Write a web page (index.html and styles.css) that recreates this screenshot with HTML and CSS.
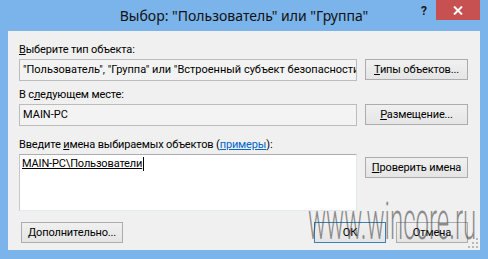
FILE: index.html
```html
<!DOCTYPE html>
<html lang="ru">
<head>
    <meta charset="UTF-8">
    <title>Выбор: "Пользователь" или "Группа"</title>
    <link rel="stylesheet" href="styles.css">
</head>
<body>
<div class="window">
    <div class="titlebar">
        <div class="title">Выбор: "Пользователь" или "Группа"</div>
        <div class="help">?</div>
        <div class="close">
            <svg width="10" height="9" viewBox="0 0 10 9"><path d="M1 0.5 L9 8.5 M9 0.5 L1 8.5" stroke="#fff" stroke-width="2"/></svg>
        </div>
    </div>

    <div class="client">
        <div class="group">
            <div class="label"><u>В</u>ыберите тип объекта:</div>
            <div class="row">
                <div class="field">"Пользователь", "Группа" или "Встроенный субъект безопасности"</div>
                <button class="btn"><u>Т</u>ипы объектов...</button>
            </div>
        </div>

        <div class="group second">
            <div class="label">В с<u>л</u>едующем месте:</div>
            <div class="row">
                <div class="field">MAIN-PC</div>
                <button class="btn"><u>Р</u>азмещение...</button>
            </div>
        </div>

        <div class="group third">
            <div class="label">Введите <u>и</u>мена выбираемых объектов (<a href="#">примеры</a>):</div>
            <div class="row top">
                <div class="names"><span class="resolved">MAIN-PC\Пользователи</span><span class="caret"></span></div>
                <button class="btn check"><u>П</u>роверить имена</button>
            </div>
        </div>

        <div class="footer">
            <button class="btn wide"><u>Д</u>ополнительно...</button>
            <div class="actions">
                <button class="btn small default">ОК</button>
                <button class="btn small">Отмена</button>
            </div>
        </div>

        <svg class="grip" width="10" height="10" viewBox="0 0 10 10">
            <rect x="8" y="0" width="2" height="2" fill="#b8b8b8"/>
            <rect x="4" y="4" width="2" height="2" fill="#b8b8b8"/>
            <rect x="8" y="4" width="2" height="2" fill="#b8b8b8"/>
            <rect x="0" y="8" width="2" height="2" fill="#b8b8b8"/>
            <rect x="4" y="8" width="2" height="2" fill="#b8b8b8"/>
            <rect x="8" y="8" width="2" height="2" fill="#b8b8b8"/>
        </svg>
    </div>

    <div class="watermark">www.wincore.ru</div>
</div>
</body>
</html>
```

FILE: styles.css
```css
body {
    margin: 0;
    font-family: Roboto, "Liberation Sans", sans-serif;
    font-size: 11px;
    letter-spacing: -0.15px;
    color: #000;
    background-color: #7ab4ea;
}

.window {
    position: relative;
    width: 488px;
    height: 259px;
    background-color: #7ab4ea;
    overflow: hidden;
}

.titlebar {
    display: flex;
    height: 31px;
    padding-left: 76px;
    letter-spacing: 0;
}
.title {
    flex: 1;
    text-align: center;
    font-family: "Noto Sans", sans-serif;
    font-size: 14px;
    line-height: 31px;
    color: #111;
}
.help {
    width: 24px;
    text-align: center;
    font-weight: bold;
    font-size: 12px;
    line-height: 22px;
    color: #1a1a1a;
}
.close {
    width: 44px;
    height: 20px;
    margin-right: 8px;
    background-color: #c75050;
    display: flex;
    align-items: center;
    justify-content: center;
}

.client {
    position: relative;
    margin: 0 8px;
    height: 219px;
    box-sizing: border-box;
    padding: 12px 12px 7px 11px;
    background-color: #f0f0f0;
}

.label {
    height: 14px;
    line-height: 14px;
    margin-bottom: 2px;
    white-space: nowrap;
}
.label a {
    color: #0066cc;
}
.group.second {
    margin-top: 7px;
}
.group.third {
    margin-top: 12px;
}

.row {
    display: flex;
    gap: 8px;
}
.row.top {
    align-items: flex-start;
}

.field {
    width: 338px;
    height: 22px;
    box-sizing: border-box;
    border: 1px solid #bcbcbc;
    background-color: #f3f3f3;
    padding: 0 3px;
    line-height: 20px;
    letter-spacing: 0;
    white-space: nowrap;
    overflow: hidden;
}

.names {
    width: 338px;
    height: 57px;
    box-sizing: border-box;
    border: 1px solid #e3e9ef;
    border-top-color: #abadb3;
    border-left-color: #c4c6cc;
    background-color: #fff;
    padding: 2px 2px;
    line-height: 14px;
}
.resolved {
    text-decoration: underline;
}
.caret {
    display: inline-block;
    width: 1px;
    height: 14px;
    margin-left: 1px;
    vertical-align: top;
    background-color: #000;
}

.btn {
    height: 21px;
    width: 103px;
    padding: 0;
    font: inherit;
    letter-spacing: inherit;
    color: #000;
    border: 1px solid #acacac;
    background: linear-gradient(#f0f0f0, #e5e5e5);
    white-space: nowrap;
}
.btn.check {
    margin-top: 3px;
}
.btn.wide {
    width: 102px;
    margin-left: 2px;
}
.btn.small {
    width: 72px;
}
.btn.default {
    border-color: #3c7fb1;
}

.footer {
    display: flex;
    justify-content: space-between;
    margin-top: 11px;
}
.actions {
    display: flex;
    gap: 10px;
}

.grip {
    position: absolute;
    right: 2px;
    bottom: 2px;
}

.watermark {
    position: absolute;
    left: 308px;
    top: 196px;
    font-family: Roboto, sans-serif;
    font-weight: 300;
    font-size: 51px;
    line-height: 51px;
    letter-spacing: 0;
    color: rgba(70, 70, 70, 0.6);
    transform: scaleX(0.47);
    transform-origin: left top;
    white-space: nowrap;
    pointer-events: none;
}
```
